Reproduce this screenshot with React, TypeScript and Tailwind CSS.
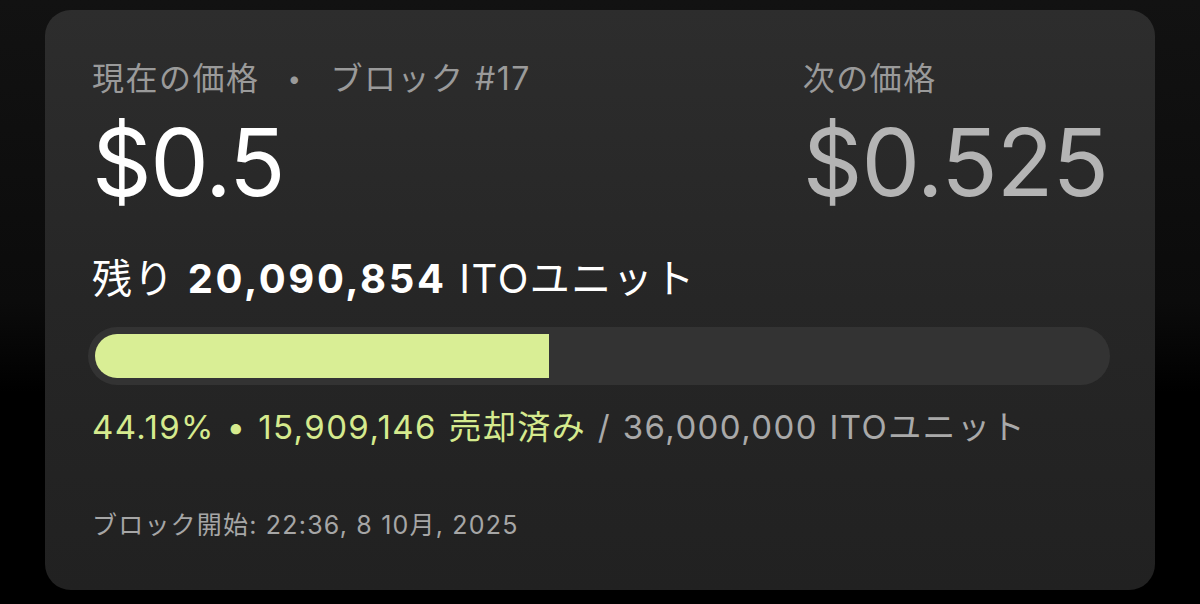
import React from "react";

const font = { fontFamily: 'Inter, "Noto Sans CJK JP", sans-serif' };

export default function App() {
  const sold = 15909146;
  const total = 36000000;
  return (
    <div
      className="w-[1200px] h-[604px] overflow-hidden bg-[linear-gradient(180deg,#121212_0%,#0b0b0b_50%,#000000_65%)] pt-[10px] pl-[45px]"
      style={font}
    >
      <div className="w-[1110px] h-[580px] rounded-[26px] bg-[linear-gradient(180deg,#2d2d2d_0%,#262626_50%,#212121_100%)] px-[47px] pt-[50px]">
        <div className="flex justify-between">
          <div className="flex flex-col">
            <div className="flex items-center text-[32px] leading-[38px] text-[#9a9a9a] tracking-[1.5px]">
              <span>現在の価格</span>
              <span className="mx-[28px] text-[24px]">•</span>
              <span>ブロック #17</span>
            </div>
            <div className="mt-[18px] text-[93px] leading-[93px] text-white tracking-[-1.5px]">
              $0.5
            </div>
          </div>
          <div className="flex flex-col">
            <div className="text-[32px] leading-[38px] text-[#9a9a9a] tracking-[1.5px]">次の価格</div>
            <div className="mt-[18px] text-[93px] leading-[93px] text-[#b4b4b4] tracking-[-1px]">
              $0.525
            </div>
          </div>
        </div>

        <div className="mt-[46px] text-[40px] leading-[48px] text-white tracking-[1.5px]">
          <span>残り </span>
          <span className="font-bold tracking-[2.6px]">20,090,854</span>
          <span> ITOユニット</span>
        </div>

        <div className="mt-[24px] h-[58px] w-[1022px] -ml-[4px] rounded-full bg-[#333333] p-[7px]">
          <div
            className="h-full w-[45%] rounded-l-full bg-[#d9ee95]"
            data-ratio={sold / total}
          />
        </div>

        <div className="mt-[22px] text-[33px] leading-[40px] tracking-[1.4px] [word-spacing:1px]">
          <span className="text-[#d5ea8e]">44.19% • 15,909,146 売却済み</span>
          <span className="text-[#a9a9a9]"> / 36,000,000 ITOユニット</span>
        </div>

        <div className="mt-[63px] text-[25px] leading-[30px] text-[#a6a6a6] tracking-[1.2px]">
          ブロック開始: 22:36, 8 10月, 2025
        </div>
      </div>
    </div>
  );
}
